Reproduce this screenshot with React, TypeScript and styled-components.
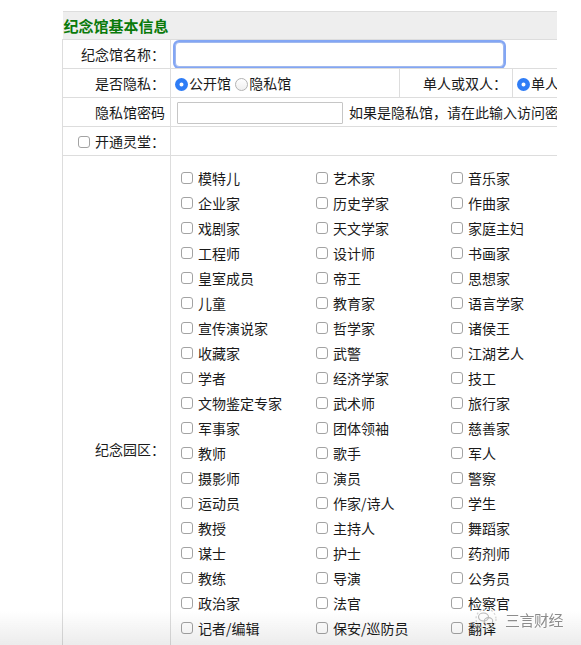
import React from "react";
import styled, { createGlobalStyle } from "styled-components";

const GlobalStyle = createGlobalStyle`
  html, body {
    margin: 0;
    padding: 0;
    background: #fff;
    font-family: "Noto Sans CJK SC", "Noto Sans", "Liberation Sans", sans-serif;
    color: #1a1a1a;
    font-size: 14px;
    overflow: hidden;
  }
`;

const Page = styled.div`
  padding: 11px 0 0 62px;
`;

const Clip = styled.div`
  width: 495px;
  overflow: hidden;
`;

const FormTable = styled.table`
  border-collapse: collapse;
  table-layout: fixed;
  width: 620px;
`;

const HeadCell = styled.td`
  height: 27px;
  padding: 0 0 0 1px;
  background: #eeeeee;
  border-top: 1px solid #dddddd;
  border-bottom: 1px solid #dddddd;
  color: #0a7a0a;
  font-weight: 700;
  font-size: 15px;
  line-height: 27px;
  white-space: nowrap;
`;

const Label = styled.td<{ $tall?: number }>`
  height: ${(p) => p.$tall ?? 28}px;
  padding: 0 5px 0 0;
  border: 1px solid #dddddd;
  text-align: right;
  vertical-align: middle;
  white-space: nowrap;
  line-height: 20px;
`;

const Cell = styled.td<{ $pad?: number; $top?: boolean }>`
  padding: 0 0 0 ${(p) => p.$pad ?? 4}px;
  border: 1px solid #dddddd;
  border-right: none;
  vertical-align: ${(p) => (p.$top ? "top" : "middle")};
  white-space: nowrap;
  overflow: hidden;
  line-height: 20px;
`;

const NameInput = styled.input`
  display: block;
  box-sizing: border-box;
  width: 329px;
  height: 25px;
  margin: 0;
  border: 1px solid #9fb8ee;
  border-radius: 4px;
  box-shadow: 0 0 0 2px #83a6f4;
  outline: none;
  background: #fff;
  font: inherit;
`;

const PassInput = styled.input`
  box-sizing: border-box;
  width: 166px;
  height: 22px;
  margin: 0 6px 0 2px;
  border: 1px solid #c6c6c6;
  border-radius: 1px;
  outline: none;
  font: inherit;
  vertical-align: middle;
`;

const Radio = styled.input.attrs({ type: "radio" })`
  appearance: none;
  -webkit-appearance: none;
  box-sizing: border-box;
  width: 13px;
  height: 13px;
  margin: 0 1px 0 1px;
  border-radius: 50%;
  border: 1px solid #b3b3b3;
  background: linear-gradient(#ffffff, #efefef);
  vertical-align: -2px;

  &:checked {
    border: none;
    background: #fff;
    box-shadow: inset 0 0 0 4.5px #2f7df6;
  }
`;

const Check = styled.input.attrs({ type: "checkbox" })`
  appearance: none;
  -webkit-appearance: none;
  box-sizing: border-box;
  flex: none;
  width: 12px;
  height: 12px;
  margin: 0;
  border: 1px solid #a3a3a3;
  border-radius: 3px;
  background: #fff;
`;

const InlineCheck = styled(Check)`
  display: inline-block;
  margin-right: 5px;
  vertical-align: -1px;
`;

const Choice = styled.label`
  display: inline;
  cursor: default;
`;

const Hint = styled.span`
  vertical-align: middle;
`;

const ItemGrid = styled.div`
  display: grid;
  grid-template-columns: repeat(3, 135px);
  grid-auto-rows: 25px;
  padding: 9px 0 0 10px;
`;

const Item = styled.label`
  display: flex;
  align-items: center;
  gap: 5px;
  white-space: nowrap;
`;

const Shade = styled.div`
  position: fixed;
  left: 0;
  right: 0;
  bottom: 0;
  height: 34px;
  background: linear-gradient(rgba(235, 235, 235, 0), rgba(236, 236, 236, 1));
  mix-blend-mode: multiply;
  pointer-events: none;
`;

const Mark = styled.div`
  position: fixed;
  right: 18px;
  bottom: 14px;
  display: flex;
  align-items: center;
  gap: 6px;
  color: #8c8c8c;
  font-size: 15px;
  letter-spacing: -0.5px;
  text-shadow: 0 0 2px #fff, 0 0 3px #fff;
  pointer-events: none;
`;

const occupations: string[][] = [
  ["模特儿", "艺术家", "音乐家"],
  ["企业家", "历史学家", "作曲家"],
  ["戏剧家", "天文学家", "家庭主妇"],
  ["工程师", "设计师", "书画家"],
  ["皇室成员", "帝王", "思想家"],
  ["儿童", "教育家", "语言学家"],
  ["宣传演说家", "哲学家", "诸侯王"],
  ["收藏家", "武警", "江湖艺人"],
  ["学者", "经济学家", "技工"],
  ["文物鉴定专家", "武术师", "旅行家"],
  ["军事家", "团体领袖", "慈善家"],
  ["教师", "歌手", "军人"],
  ["摄影师", "演员", "警察"],
  ["运动员", "作家/诗人", "学生"],
  ["教授", "主持人", "舞蹈家"],
  ["谋士", "护士", "药剂师"],
  ["教练", "导演", "公务员"],
  ["政治家", "法官", "检察官"],
  ["记者/编辑", "保安/巡防员", "翻译"],
];

function WeChatGlyph() {
  return (
    <svg width="26" height="24" viewBox="0 0 26 24" fill="none">
      <circle cx="13" cy="12" r="10" stroke="#d2d2d2" strokeWidth="1.2" strokeDasharray="2 2" />
      <ellipse cx="10.5" cy="10" rx="5" ry="4" stroke="#b9b9b9" strokeWidth="1.1" />
      <ellipse cx="15.5" cy="14" rx="4.2" ry="3.4" stroke="#b9b9b9" strokeWidth="1.1" />
    </svg>
  );
}

export default function App() {
  return (
    <>
      <GlobalStyle />
      <Page>
        <Clip>
          <FormTable>
            <colgroup>
              <col style={{ width: 108 }} />
              <col style={{ width: 229 }} />
              <col style={{ width: 113 }} />
              <col style={{ width: 170 }} />
            </colgroup>
            <tbody>
              <tr>
                <HeadCell colSpan={4}>纪念馆基本信息</HeadCell>
              </tr>
              <tr>
                <Label>纪念馆名称：</Label>
                <Cell colSpan={3} $pad={4}>
                  <NameInput type="text" />
                </Cell>
              </tr>
              <tr>
                <Label>是否隐私：</Label>
                <Cell $pad={3}>
                  <Choice>
                    <Radio name="privacy" defaultChecked />
                    公开馆
                  </Choice>{" "}
                  <Choice>
                    <Radio name="privacy" />
                    隐私馆
                  </Choice>
                </Cell>
                <Label>单人或双人：</Label>
                <Cell $pad={3}>
                  <Choice>
                    <Radio name="single" defaultChecked />
                    单人
                  </Choice>
                </Cell>
              </tr>
              <tr>
                <Label>隐私馆密码</Label>
                <Cell colSpan={3} $pad={4}>
                  <PassInput type="password" />
                  <Hint>如果是隐私馆，请在此输入访问密码</Hint>
                </Cell>
              </tr>
              <tr>
                <Label>
                  <InlineCheck />
                  开通灵堂：
                </Label>
                <Cell colSpan={3} />
              </tr>
              <tr>
                <Label $tall={585}>纪念园区：</Label>
                <Cell colSpan={3} $pad={0} $top>
                  <ItemGrid>
                    {occupations.flat().map((name) => (
                      <Item key={name}>
                        <Check />
                        {name}
                      </Item>
                    ))}
                  </ItemGrid>
                </Cell>
              </tr>
            </tbody>
          </FormTable>
        </Clip>
      </Page>
      <Shade />
      <Mark>
        <WeChatGlyph />
        三言财经
      </Mark>
    </>
  );
}
